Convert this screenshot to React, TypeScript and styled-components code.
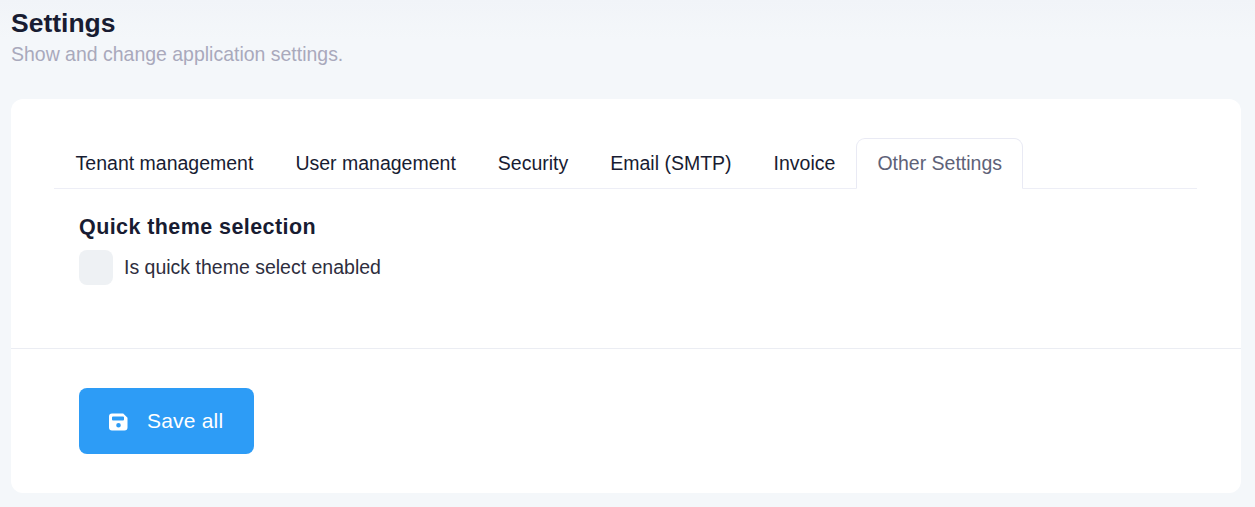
import React from 'react';
import styled, { createGlobalStyle } from 'styled-components';

const GlobalStyle = createGlobalStyle`
  html, body {
    margin: 0;
    height: 100%;
  }
  body {
    background: #f4f7fa;
    font-family: "Liberation Sans", Arial, sans-serif;
  }
`;

const Page = styled.div`
  height: 507px;
  box-sizing: border-box;
  padding: 8px 14px 14px 11px;
  overflow: hidden;
  background: linear-gradient(180deg, #f1f4f8 0, #f4f7fa 40px);
`;

const Title = styled.h3`
  margin: 0;
  font-size: 26.5px;
  line-height: 30px;
  font-weight: 700;
  color: #181c32;
`;

const Subtitle = styled.div`
  margin-top: 1px;
  font-size: 19.48px;
  line-height: 30px;
  color: #a9a9bc;
`;

const Card = styled.section`
  margin-top: 30px;
  height: 394px;
  background: #fff;
  border-radius: 12px;
  display: flex;
  flex-direction: column;
`;

const CardBody = styled.div`
  height: 250px;
  box-sizing: border-box;
  padding: 39px 44px 0 43px;
  border-bottom: 1px solid #ebedf3;
`;

const Tabs = styled.ul`
  display: flex;
  margin: 0;
  padding: 0 0 0 0.6px;
  list-style: none;
  height: 50px;
  border-bottom: 1px solid #edeef6;
`;

const Tab = styled.li<{ $active?: boolean }>`
  box-sizing: border-box;
  height: 51px;
  padding: 0 20px;
  font-size: 19.5px;
  line-height: 49px;
  white-space: nowrap;
  color: ${p => (p.$active ? '#5e6278' : '#181c32')};
  background: ${p => (p.$active ? '#fff' : 'transparent')};
  border: 1px solid ${p => (p.$active ? '#e9eaf4' : 'transparent')};
  border-bottom: ${p => (p.$active ? '1px solid #fff' : 'none')};
  border-radius: 9px 9px 0 0;
`;

const TabContent = styled.div`
  padding: 24px 0 0 25px;
`;

const SectionTitle = styled.h5`
  margin: 0;
  font-size: 21.5px;
  line-height: 28px;
  font-weight: 700;
  letter-spacing: 0.42px;
  color: #181c32;
`;

const CheckRow = styled.label`
  display: flex;
  align-items: center;
  gap: 11px;
  margin-top: 9px;
  font-size: 19.5px;
  color: #2e2e3e;
`;

const CheckBox = styled.span`
  width: 34px;
  height: 35px;
  border-radius: 8px;
  background: #eef1f4;
`;

const CardFooter = styled.div`
  padding: 39px 68px;
`;

const SaveButton = styled.button`
  display: flex;
  align-items: center;
  gap: 19px;
  width: 175px;
  height: 66px;
  padding: 0 0 0 30px;
  box-sizing: border-box;
  border: none;
  border-radius: 8px;
  background: #2d9cf6;
  color: #fff;
  font-family: inherit;
  font-size: 21px;
  letter-spacing: 0.2px;
`;

const SaveGlyph = styled.svg`
  margin-top: 2px;
`;

function SaveIcon() {
  return (
    <SaveGlyph width="19" height="18" viewBox="0 0 19 18" fill="#fff" aria-hidden="true">
      <path
        fillRule="evenodd"
        d="M3 0.5H14.2L18.5 4.8V14.5a3 3 0 0 1-3 3H3a3 3 0 0 1-3-3V3.5a3 3 0 0 1 3-3ZM4 3.5a1 1 0 0 0-1 1V6.5a1 1 0 0 0 1 1H14a1 1 0 0 0 1-1V4.5a1 1 0 0 0-1-1ZM9.5 10a2.3 2.3 0 1 0 0 4.6a2.3 2.3 0 1 0 0-4.6Z"
      />
    </SaveGlyph>
  );
}

const tabs = ['Tenant management', 'User management', 'Security', 'Email (SMTP)', 'Invoice', 'Other Settings'];

export default function App() {
  return (
    <>
      <GlobalStyle />
      <Page>
        <Title>Settings</Title>
        <Subtitle>Show and change application settings.</Subtitle>
        <Card>
          <CardBody>
            <Tabs>
              {tabs.map(t => (
                <Tab key={t} $active={t === 'Other Settings'}>
                  {t}
                </Tab>
              ))}
            </Tabs>
            <TabContent>
              <SectionTitle>Quick theme selection</SectionTitle>
              <CheckRow>
                <CheckBox />
                Is quick theme select enabled
              </CheckRow>
            </TabContent>
          </CardBody>
          <CardFooter>
            <SaveButton>
              <SaveIcon />
              Save all
            </SaveButton>
          </CardFooter>
        </Card>
      </Page>
    </>
  );
}
